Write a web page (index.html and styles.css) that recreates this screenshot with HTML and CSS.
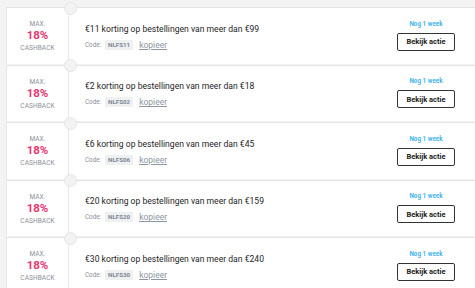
FILE: index.html
```html
<!DOCTYPE html>
<html lang="nl">
<head>
<meta charset="utf-8">
<link rel="stylesheet" href="styles.css">
</head>
<body>
<div class="list">
  <div class="card">
    <div class="cb"><span class="max">MAX.</span><span class="pct">18%</span><span class="lbl">CASHBACK</span></div>
    <div class="main">
      <div class="title">€11 korting op bestellingen van meer dan €99</div>
      <div class="code">Code: <span class="chip">NLFS11</span><a class="copy">kopieer</a></div>
    </div>
    <div class="side"><span class="due">Nog 1 week</span><button class="btn">Bekijk actie</button></div>
  </div>
  <div class="card">
    <div class="cb"><span class="max">MAX.</span><span class="pct">18%</span><span class="lbl">CASHBACK</span></div>
    <div class="main">
      <div class="title">€2 korting op bestellingen van meer dan €18</div>
      <div class="code">Code: <span class="chip">NLFS02</span><a class="copy">kopieer</a></div>
    </div>
    <div class="side"><span class="due">Nog 1 week</span><button class="btn">Bekijk actie</button></div>
  </div>
  <div class="card">
    <div class="cb"><span class="max">MAX.</span><span class="pct">18%</span><span class="lbl">CASHBACK</span></div>
    <div class="main">
      <div class="title">€6 korting op bestellingen van meer dan €45</div>
      <div class="code">Code: <span class="chip">NLFS06</span><a class="copy">kopieer</a></div>
    </div>
    <div class="side"><span class="due">Nog 1 week</span><button class="btn">Bekijk actie</button></div>
  </div>
  <div class="card">
    <div class="cb"><span class="max">MAX.</span><span class="pct">18%</span><span class="lbl">CASHBACK</span></div>
    <div class="main">
      <div class="title">€20 korting op bestellingen van meer dan €159</div>
      <div class="code">Code: <span class="chip">NLFS20</span><a class="copy">kopieer</a></div>
    </div>
    <div class="side"><span class="due">Nog 1 week</span><button class="btn">Bekijk actie</button></div>
  </div>
  <div class="card">
    <div class="cb"><span class="max">MAX.</span><span class="pct">18%</span><span class="lbl">CASHBACK</span></div>
    <div class="main">
      <div class="title">€30 korting op bestellingen van meer dan €240</div>
      <div class="code">Code: <span class="chip">NLFS30</span><a class="copy">kopieer</a></div>
    </div>
    <div class="side"><span class="due">Nog 1 week</span><button class="btn">Bekijk actie</button></div>
  </div>
</div>
</body>
</html>
```

FILE: styles.css
```css
* { box-sizing: border-box; }
html, body { margin: 0; background: #f3f3f3; }
body {
  font-family: Roboto, "Liberation Sans", sans-serif;
  color: #222;
  overflow: hidden;
  height: 288px;
}
.list {
  padding: 7px 0 0 6px;
  display: flex;
  flex-direction: column;
  gap: 1px;
}
.card {
  position: relative;
  background: #fff;
  border-top: 1px solid #e4e4e4;
  border-left: 1px solid #e8e8e8;
  height: 56.5px;
  display: grid;
  grid-template-columns: 62px 1fr auto;
  align-items: center;
}
.card::before {
  content: "";
  position: absolute;
  left: 56.5px;
  top: -6.5px;
  width: 11px;
  height: 11px;
  border-radius: 50%;
  background: #f3f3f3;
  border: 1px solid #e6e6e6;
  z-index: 2;
}
.cb {
  height: 100%;
  border-right: 1px solid #e8e8e8;
  display: flex;
  flex-direction: column;
  align-items: center;
  justify-content: center;
  padding-top: 1px;
}
.max, .lbl {
  font-size: 6.5px;
  color: #8a8f9a;
  letter-spacing: 0.1px;
}
.pct {
  font-size: 11.5px;
  font-weight: 700;
  color: #e8346f;
  line-height: 13px;
  margin: 1px 0 2px;
}
.main {
  padding-left: 16px;
  padding-top: 1px;
}
.title {
  font-size: 8.6px;
  color: #1e1e1e;
  line-height: 12px;
}
.code {
  margin-top: 5px;
  font-size: 6.3px;
  color: #8a8f9a;
  display: flex;
  align-items: center;
}
.chip {
  background: #eef0f2;
  color: #7d8592;
  font-weight: 700;
  font-size: 6.2px;
  padding: 1px 3px;
  margin-left: 4px;
  margin-right: 6px;
}
.copy {
  font-size: 8.5px;
  color: #8e96a0;
  text-decoration: underline;
}
.side {
  display: flex;
  flex-direction: column;
  align-items: center;
  padding-right: 20px;
  padding-bottom: 1px;
}
.due {
  font-size: 6.3px;
  font-weight: 700;
  color: #45b4ea;
  margin-bottom: 5px;
}
.btn {
  font-family: Roboto, "Liberation Sans", sans-serif;
  font-size: 7.5px;
  font-weight: 700;
  color: #222;
  background: #fff;
  border: 1px solid #333;
  border-radius: 2px;
  width: 58px;
  height: 18px;
  padding: 0;
}
```
